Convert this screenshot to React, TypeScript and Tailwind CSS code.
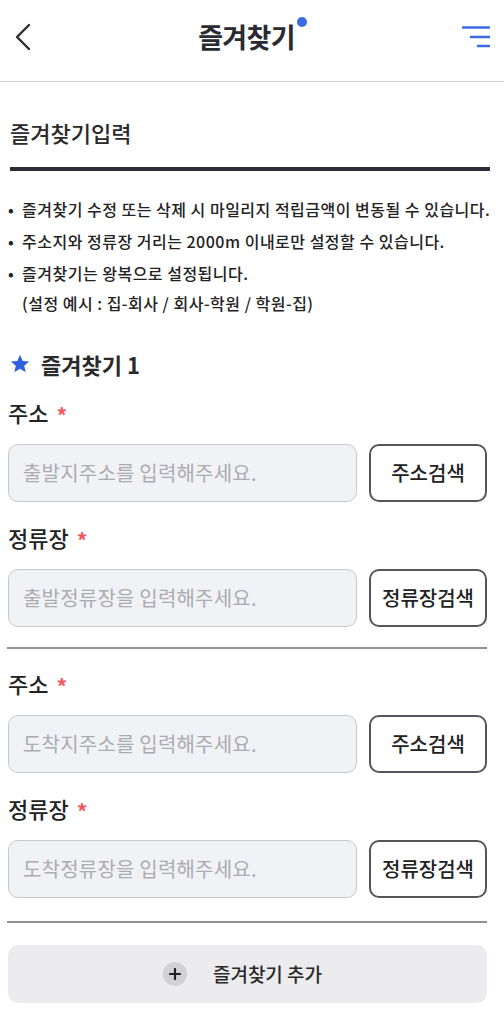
import React from "react";

const font = { fontFamily: "'Noto Sans CJK KR', 'Noto Sans', sans-serif" };

const notices = [
  "즐겨찾기 수정 또는 삭제 시 마일리지 적립금액이 변동될 수 있습니다.",
  "주소지와 정류장 거리는 2000m 이내로만 설정할 수 있습니다.",
];

function Label({ text }: { text: string }) {
  return (
    <div className="flex items-start h-6 text-[22px] leading-6 font-medium text-[#222]">
      {text}
      <span className="ml-[8px] mt-[3px] text-[21px] leading-6 font-bold text-[#f2555a]">*</span>
    </div>
  );
}

function Field({ placeholder, button }: { placeholder: string; button: string }) {
  return (
    <div className="flex gap-3 h-[58px]">
      <div className="flex-1 flex items-center rounded-[10px] border-[1.5px] border-[#c8c8cc] bg-[#f1f2f5] pl-[14px] text-[20px] tracking-[0.2px] text-[#ababb0]">
        {placeholder}
      </div>
      <button className="w-[118px] rounded-[10px] border-2 border-[#55555a] bg-white text-[20px] font-medium text-[#222]">
        {button}
      </button>
    </div>
  );
}

function Group({ from }: { from: "출발" | "도착" }) {
  return (
    <div className="flex flex-col">
      <Label text="주소" />
      <div className="mt-5">
        <Field placeholder={`${from}지주소를 입력해주세요.`} button="주소검색" />
      </div>
      <div className="mt-[23px]">
        <Label text="정류장" />
      </div>
      <div className="mt-5">
        <Field placeholder={`${from}정류장을 입력해주세요.`} button="정류장검색" />
      </div>
    </div>
  );
}

export default function App() {
  return (
    <div className="w-[504px] min-h-[1021px] bg-white text-[#222]" style={font}>
      {/* header */}
      <header className="relative flex items-center justify-between h-[82px] border-b border-[#cfcfd2] pl-[15px] pr-[14px]">
        <svg width="16" height="28" viewBox="0 0 16 28" fill="none" className="mb-[8px]">
          <path d="M14 2L2 14L14 26" stroke="#2a2a30" strokeWidth="2.4" strokeLinecap="round" strokeLinejoin="round" />
        </svg>
        <div className="relative mb-[8px]">
          <h1 className="text-[27px] leading-8 font-bold text-[#2a2a32] tracking-tight">즐겨찾기</h1>
          <span className="absolute -right-[12px] -top-[4px] w-[10px] h-[10px] rounded-full bg-[#3a6ae6]" />
        </div>
        <svg width="28" height="22" viewBox="0 0 28 22" fill="none" className="mb-[8px]">
          <path d="M1 1.5H27M9 11H27M16 20H27" stroke="#3a6ae6" strokeWidth="2.6" strokeLinecap="round" />
        </svg>
      </header>

      {/* title */}
      <div className="pl-[10px] pr-[14px]">
        <h2 className="pt-[36px] text-[22px] leading-7 font-medium text-[#2a2a2a]">즐겨찾기입력</h2>
        <div className="mt-[21px] h-[4px] bg-[#2d2d3a]" />
      </div>

      {/* notices */}
      <ul className="mt-[27px] pl-2 pr-1 flex flex-col gap-[10px] text-[16px] leading-[22px] font-medium text-[#222] tracking-[0.5px]">
        {notices.map((n) => (
          <li key={n} className="flex">
            <span className="w-[14px] shrink-0">•</span>
            <span className="whitespace-nowrap">{n}</span>
          </li>
        ))}
        <li className="flex">
          <span className="w-[14px] shrink-0">•</span>
          <span>
            즐겨찾기는 왕복으로 설정됩니다.
            <span className="block mt-[8px]">(설정 예시 : 집-회사 / 회사-학원 / 학원-집)</span>
          </span>
        </li>
      </ul>

      {/* form */}
      <div className="pl-2 pr-[17px]">
        <div className="mt-[36px] flex items-center gap-[10px] h-7">
          <svg width="22" height="22" viewBox="0 0 24 24" className="ml-[1px]">
            <path d="M12 2l2.9 6.6 7.1.6-5.4 4.7 1.6 7L12 17.2 5.8 20.9l1.6-7L2 9.2l7.1-.6z" fill="#2f5fe0" />
          </svg>
          <span className="text-[22px] font-semibold text-[#2a2a2a]">즐겨찾기 1</span>
        </div>

        <div className="mt-[22px]">
          <Group from="출발" />
        </div>

        <div className="mt-[20px] h-[2px] bg-[#8e8e93] -ml-[1px]" />

        <div className="mt-[22px]">
          <Group from="도착" />
        </div>

        <div className="mt-[23px] h-[2px] bg-[#8e8e93] -ml-[1px]" />

        <button className="mt-[22px] w-full h-[58px] rounded-[10px] bg-[#ececee] flex items-center justify-center gap-[26px] pr-[10px]">
          <span className="w-6 h-6 rounded-full bg-[#d2d2d6] flex items-center justify-center">
            <svg width="12" height="12" viewBox="0 0 12 12">
              <path d="M6 1V11M1 6H11" stroke="#222" strokeWidth="2.2" strokeLinecap="round" />
            </svg>
          </span>
          <span className="text-[19px] font-medium text-[#2a2a2a]">즐겨찾기 추가</span>
        </button>
      </div>
    </div>
  );
}
